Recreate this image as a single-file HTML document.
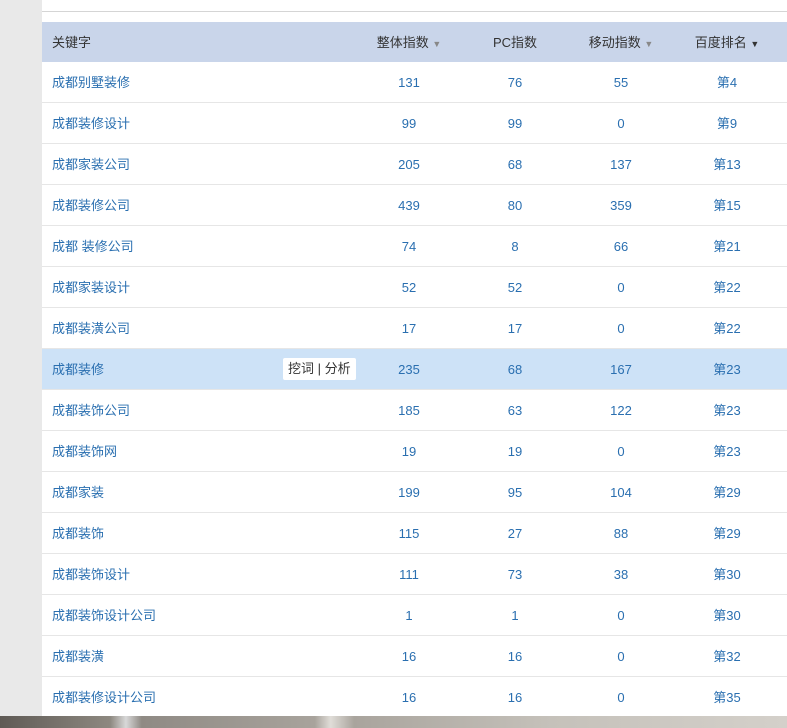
<!DOCTYPE html><html><head><meta charset="utf-8"><style>
body{margin:0;width:787px;height:728px;overflow:hidden;background:#fff;font-family:"Liberation Sans","Noto Sans CJK SC",sans-serif;font-size:13px;position:relative}
.lb{position:absolute;left:0;top:0;width:42px;height:716px;background:#e9e9e9}
.tl{position:absolute;left:42px;top:11px;width:745px;height:1px;background:#d5d5d5}
.hd{position:absolute;left:42px;top:22px;width:745px;height:40px;background:#c9d5ea;color:#333}
.r{position:absolute;left:42px;width:745px;height:40px;border-bottom:1px solid #e6e6e6;color:#2a6fb0}
.c{position:absolute;top:0;line-height:42px;transform:translateX(-50%);white-space:nowrap}
.k{position:absolute;left:10px;line-height:42px}
.hl{background:#cde2f7}
.tag{position:absolute;left:241px;top:9px;height:22px;line-height:22px;background:#fff;padding:0 5px;color:#333;border-radius:2px}
.ar{font-size:9px;color:#888}
.bot{position:absolute;left:0;top:716px;width:787px;height:12px;background:linear-gradient(90deg,#5f5a55,#8d8880 14%,#d8d8d8 16%,#8f8a84 18%,#a8a39c 40%,#e0ddd8 42%,#a9a49d 45%,#c5c1ba 70%,#d4d0ca 100%)}
</style></head><body>
<div class="lb"></div><div class="tl"></div>
<div class="hd"><span class="k">关键字</span><span class="c" style="left:367px">整体指数 <span class="ar">▼</span></span><span class="c" style="left:473px">PC指数</span><span class="c" style="left:579px">移动指数 <span class="ar">▼</span></span><span class="c" style="left:685px">百度排名 <span class="ar" style="color:#333">▼</span></span></div>
<div id="rows"></div>
<div class="bot"></div>
<script>
var d=[["成都别墅装修",131,76,55,"第4"],["成都装修设计",99,99,0,"第9"],["成都家装公司",205,68,137,"第13"],["成都装修公司",439,80,359,"第15"],["成都 装修公司",74,8,66,"第21"],["成都家装设计",52,52,0,"第22"],["成都装潢公司",17,17,0,"第22"],["成都装修",235,68,167,"第23"],["成都装饰公司",185,63,122,"第23"],["成都装饰网",19,19,0,"第23"],["成都家装",199,95,104,"第29"],["成都装饰",115,27,88,"第29"],["成都装饰设计",111,73,38,"第30"],["成都装饰设计公司",1,1,0,"第30"],["成都装潢",16,16,0,"第32"],["成都装修设计公司",16,16,0,"第35"]];
var h="";d.forEach(function(r,i){h+='<div class="r'+(i==7?' hl':'')+'" style="top:'+(62+i*41)+'px"><span class="k">'+r[0]+'</span>'+(i==7?'<span class="tag">挖词 | 分析</span>':'')+'<span class="c" style="left:367px">'+r[1]+'</span><span class="c" style="left:473px">'+r[2]+'</span><span class="c" style="left:579px">'+r[3]+'</span><span class="c" style="left:685px">'+r[4]+'</span></div>'});
document.getElementById("rows").innerHTML=h;
</script>
</body></html>
